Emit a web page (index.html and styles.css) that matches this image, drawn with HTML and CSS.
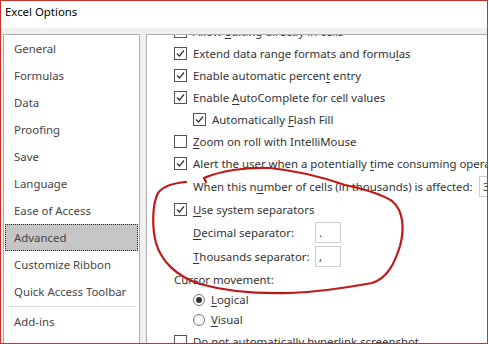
FILE: index.html
```html
<!DOCTYPE html>
<html lang="en">

<head>
    <meta charset="UTF-8">
    <meta name="viewport" content="width=device-width, initial-scale=1.0">
    <title>Excel Options</title>
    <link rel="stylesheet" href="styles.css">
</head>

<body>
    <div class="window">
        <div class="titlebar">Excel Options</div>

        <div class="main">
            <ul class="nav">
                <li>General</li>
                <li>Formulas</li>
                <li>Data</li>
                <li>Proofing</li>
                <li>Save</li>
                <li>Language</li>
                <li>Ease of Access</li>
                <li class="active">Advanced</li>
                <li>Customize Ribbon</li>
                <li>Quick Access Toolbar</li>
                <li class="divider"></li>
                <li>Add-ins</li>
            </ul>

            <div class="pane">
                <div class="list">
                    <div class="row"><span class="cb on"></span><span>Allow <u>e</u>diting directly in cells</span></div>
                    <div class="row"><span class="cb on"></span><span>Extend data range formats and formu<u>l</u>as</span></div>
                    <div class="row"><span class="cb on"></span><span>Enable automatic percen<u>t</u> entry</span></div>
                    <div class="row"><span class="cb on"></span><span>Enable <u>A</u>utoComplete for cell values</span></div>
                    <div class="row sub"><span class="cb on"></span><span>Automatically <u>F</u>lash Fill</span></div>
                    <div class="row"><span class="cb"></span><span><u>Z</u>oom on roll with IntelliMouse</span></div>
                    <div class="row"><span class="cb on"></span><span>Alert the user when a potentially <u>t</u>ime consuming operation occurs</span></div>
                    <div class="row sub tall">
                        <span class="label wide">When this n<u>u</u>mber of cells (in thousands) is affected:</span>
                        <span class="box">33,554</span>
                    </div>
                    <div class="row"><span class="cb on"></span><span><u>U</u>se system separators</span></div>
                    <div class="row sub tall">
                        <span class="label"><u>D</u>ecimal separator:</span>
                        <span class="box">.</span>
                    </div>
                    <div class="row sub tall">
                        <span class="label"><u>T</u>housands separator:</span>
                        <span class="box">,</span>
                    </div>
                    <div class="row"><span>Cursor movement:</span></div>
                    <div class="row sub short"><span class="radio on"></span><span><u>L</u>ogical</span></div>
                    <div class="row sub mid"><span class="radio"></span><span><u>V</u>isual</span></div>
                    <div class="row"><span class="cb"></span><span>Do not automatically hyperlink screenshot</span></div>
                </div>
            </div>
        </div>

        <!-- red pen circle drawn over the separators block -->
        <svg class="scribble" width="489" height="344" viewBox="0 0 489 344">
            <path d="M 186 182 C 174 183, 163 186, 158 193 C 152 205, 152 228, 156 243 C 161 260, 175 276, 200 284 C 225 291, 258 294, 290 293 C 320 292, 350 287, 372 283 C 388 278, 395 262, 400 246 C 405 228, 403 210, 392 201 C 378 192, 358 188, 345 185 C 325 178, 300 171, 270 168 C 245 167, 220 171, 204 178 L 206 182" />
        </svg>
    </div>
</body>

</html>
```

FILE: styles.css
```css
* {
    margin: 0;
    padding: 0;
    box-sizing: border-box;
}

body {
    width: 489px;
    height: 344px;
    overflow: hidden;
    background-color: #fff;
    font-family: "Segoe UI", "Noto Sans", sans-serif;
    font-size: 11.4px;
    color: #333;
}

u {
    text-underline-offset: 2px;
}

.window {
    position: relative;
    width: 488px;
    height: 344px;
    border: 1px solid #c8312a;
    background-color: #f0f0f0;
    overflow: hidden;
}

.titlebar {
    height: 27px;
    padding-left: 4px;
    line-height: 22px;
    background-color: #fff;
    color: #000;
}

.main {
    display: flex;
    gap: 6px;
    height: 316px;
    padding: 6px 0 0 2px;
}

/* left category list */
.nav {
    flex: none;
    width: 137px;
    list-style: none;
    background-color: #fff;
    border: 1px solid #adadad;
    border-bottom: none;
}

.nav li {
    height: 27px;
    line-height: 27px;
    margin: 0 1px;
    padding-left: 9px;
    color: #444;
}

.nav .active {
    background-color: #c6c6c6;
    border: 1px dotted #222;
    padding-left: 8px;
    line-height: 25px;
}

.nav .divider {
    height: 1px;
    margin: 1px 3px;
    background-color: #dadada;
}

/* right settings pane */
.pane {
    flex: 1;
    overflow: hidden;
    background-color: #fff;
    border: 1px solid #adadad;
    border-right: none;
    border-bottom: none;
    padding-left: 27px;
}

.list {
    margin-top: -15px;
}

.row {
    display: flex;
    align-items: center;
    gap: 6px;
    height: 22px;
    white-space: nowrap;
}

.row.sub {
    padding-left: 19px;
}

.row.tall {
    height: 24px;
}

.row.short {
    height: 19px;
}

.row.mid {
    height: 21px;
}

.cb {
    flex: none;
    width: 13px;
    height: 13px;
    border: 1px solid #555;
    background-color: #fff;
}

.cb.on {
    background: #fff url("data:image/svg+xml,%3Csvg xmlns='http://www.w3.org/2000/svg' width='11' height='11'%3E%3Cpath d='M2 5.5 L4.5 8 L9 2.5' fill='none' stroke='%23333' stroke-width='1.3'/%3E%3C/svg%3E") no-repeat center;
}

.radio {
    flex: none;
    display: flex;
    align-items: center;
    justify-content: center;
    width: 12px;
    height: 12px;
    border: 1px solid #777;
    border-radius: 50%;
}

.radio.on::after {
    content: "";
    width: 6px;
    height: 6px;
    border-radius: 50%;
    background-color: #333;
}

.label {
    flex: none;
    width: 116px;
}

.label.wide {
    width: 280px;
    overflow: hidden;
}

.box {
    flex: none;
    width: 26px;
    height: 21px;
    padding-left: 3px;
    line-height: 19px;
    border: 1px solid #cdcdcd;
    overflow: hidden;
}

.scribble {
    position: absolute;
    top: -1px;
    left: -1px;
    pointer-events: none;
}

.scribble path {
    fill: none;
    stroke: #c01818;
    stroke-width: 2.2;
    stroke-linecap: round;
    stroke-linejoin: round;
}
```
